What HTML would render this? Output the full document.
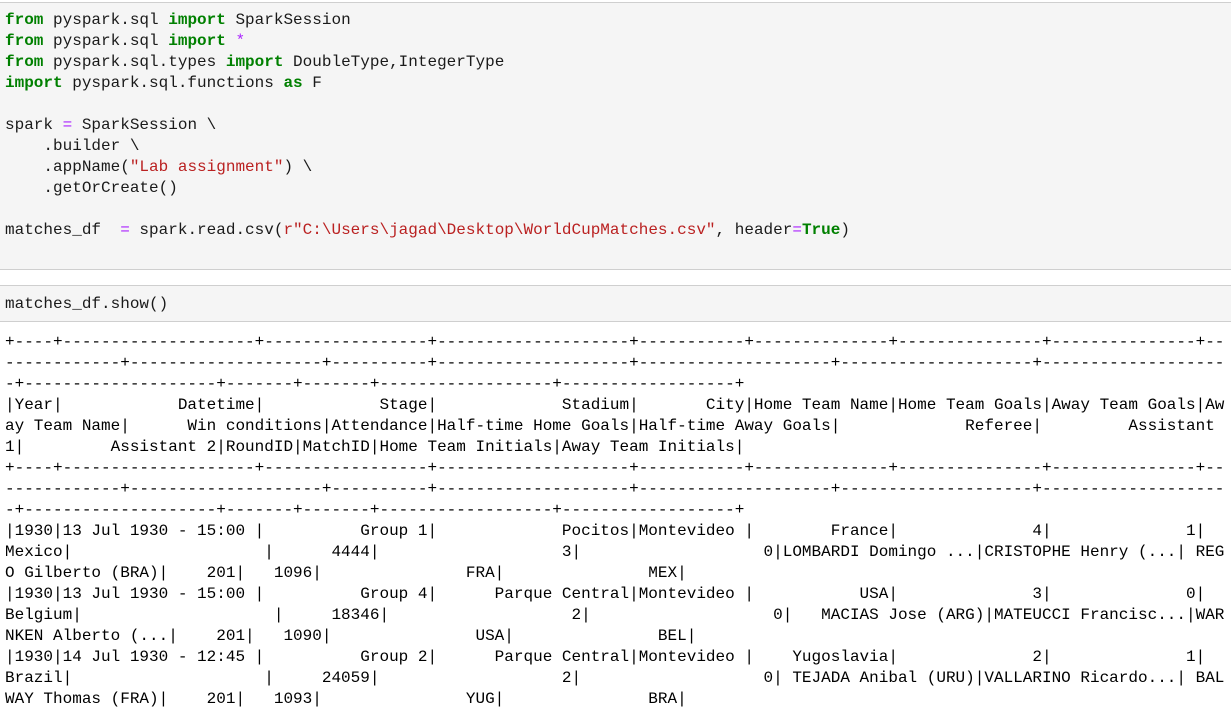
<!DOCTYPE html>
<html><head><meta charset="utf-8"><style>
body{margin:0;width:1231px;height:700px;overflow:hidden;background:#fff;font-family:"Liberation Mono",monospace;font-size:16px;color:#000}
.cell{position:absolute;left:0;width:1231px;background:#f5f5f5;border-top:1px solid #cfcfcf;border-bottom:1px solid #cfcfcf;box-sizing:border-box}
pre{margin:0;font-family:"Liberation Mono",monospace;font-size:16px;line-height:21px;position:absolute;left:5px}
.k{color:#008000;font-weight:bold}.s{color:#ba2121}.o{color:#aa22ff}
#out{top:332px;width:1220px;white-space:pre-wrap;word-break:break-all;color:#000}
</style></head><body>
<div class="cell" style="top:2px;height:268px"></div>
<pre style="top:10px;color:#1a1a1a"><span class="k">from</span> pyspark.sql <span class="k">import</span> SparkSession
<span class="k">from</span> pyspark.sql <span class="k">import</span> <span class="o">*</span>
<span class="k">from</span> pyspark.sql.types <span class="k">import</span> DoubleType,IntegerType
<span class="k">import</span> pyspark.sql.functions <span class="k">as</span> F

spark <span class="o">=</span> SparkSession \
    .builder \
    .appName(<span class="s">"Lab assignment"</span>) \
    .getOrCreate()

matches_df  <span class="o">=</span> spark.read.csv(<span class="s">r"C:\Users\jagad\Desktop\WorldCupMatches.csv"</span>, header<span class="o">=</span><span class="k">True</span>)</pre>
<div class="cell" style="top:285px;height:37px"></div>
<pre style="top:294px;color:#1a1a1a">matches_df.show()</pre>
<pre id="out">+----+--------------------+-----------------+--------------------+-----------+--------------+---------------+---------------+--------------+--------------------+----------+--------------------+--------------------+--------------------+--------------------+--------------------+-------+-------+------------------+------------------+
|Year|            Datetime|            Stage|             Stadium|       City|Home Team Name|Home Team Goals|Away Team Goals|Away Team Name|      Win conditions|Attendance|Half-time Home Goals|Half-time Away Goals|             Referee|         Assistant 1|         Assistant 2|RoundID|MatchID|Home Team Initials|Away Team Initials|
+----+--------------------+-----------------+--------------------+-----------+--------------+---------------+---------------+--------------+--------------------+----------+--------------------+--------------------+--------------------+--------------------+--------------------+-------+-------+------------------+------------------+
|1930|13 Jul 1930 - 15:00 |          Group 1|             Pocitos|Montevideo |        France|              4|              1|        Mexico|                    |      4444|                   3|                   0|LOMBARDI Domingo ...|CRISTOPHE Henry (...| REGO Gilberto (BRA)|    201|   1096|               FRA|               MEX|
|1930|13 Jul 1930 - 15:00 |          Group 4|      Parque Central|Montevideo |           USA|              3|              0|       Belgium|                    |     18346|                   2|                   0|   MACIAS Jose (ARG)|MATEUCCI Francisc...|WARNKEN Alberto (...|    201|   1090|               USA|               BEL|
|1930|14 Jul 1930 - 12:45 |          Group 2|      Parque Central|Montevideo |    Yugoslavia|              2|              1|        Brazil|                    |     24059|                   2|                   0| TEJADA Anibal (URU)|VALLARINO Ricardo...| BALWAY Thomas (FRA)|    201|   1093|               YUG|               BRA|</pre>
</body></html>
